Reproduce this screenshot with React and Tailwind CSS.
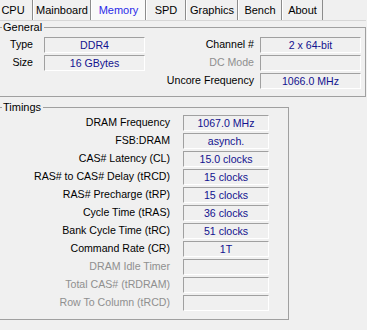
import React from "react";

const font = { fontFamily: '"Liberation Sans", Arial, sans-serif' };

function Tab({ label, w, active, extra = "" }) {
  return (
    <div
      className={`flex h-[20px] shrink-0 items-center justify-center border-l border-r border-l-white border-r-[#8c8c8c] ${
        active ? "bg-[#f9f9f9] text-[#2a2ae8]" : "bg-[#f0f0f0] text-black"
      } ${extra}`}
      style={{ width: w }}
    >
      <span className="leading-none">{label}</span>
    </div>
  );
}

function Field({ value, w }) {
  return (
    <div
      className="flex h-[16px] items-center justify-center border-t border-l border-t-[#a0a0a0] border-l-[#a0a0a0] border-b border-r border-b-white border-r-white text-[#12128f] leading-none"
      style={{ width: w }}
    >
      {value}
    </div>
  );
}

const timings = [
  ["DRAM Frequency", "1067.0 MHz", true],
  ["FSB:DRAM", "asynch.", true],
  ["CAS# Latency (CL)", "15.0 clocks", true],
  ["RAS# to CAS# Delay (tRCD)", "15 clocks", true],
  ["RAS# Precharge (tRP)", "15 clocks", true],
  ["Cycle Time (tRAS)", "36 clocks", true],
  ["Bank Cycle Time (tRC)", "51 clocks", true],
  ["Command Rate (CR)", "1T", true],
  ["DRAM Idle Timer", "", false],
  ["Total CAS# (tRDRAM)", "", false],
  ["Row To Column (tRCD)", "", false],
];

export default function App() {
  return (
    <div
      className="relative h-[330px] w-[367px] overflow-hidden bg-[#f0f0f0] text-[10.6px] text-black"
      style={font}
    >
      {/* Tabs */}
      <div className="flex h-[20px] items-stretch text-[11px]">
        <Tab label="CPU" w={40} extra="-ml-[7px]" />
        <Tab label="Mainboard" w={58} />
        <Tab label="Memory" w={55} active />
        <Tab label="SPD" w={40} />
        <Tab label="Graphics" w={52} />
        <Tab label="Bench" w={44} />
        <Tab label="About" w={41} />
      </div>
      {/* panel border */}
      <div className="h-px w-[366px] bg-[#d6d6d6]" />

      {/* General */}
      <fieldset className="-ml-px h-[76px] w-[367px] border border-[#a0a0a0]">
        <legend className="ml-[2px] pr-[2px] pl-px text-[11px] leading-[13px]">General</legend>
        <div className="mt-[3px] flex">
          <div className="flex flex-col gap-[2px]">
            <div className="flex h-[16px] items-center">
              <span className="w-[33px] text-right">Type</span>
              <div className="ml-[11px]">
                <Field value="DDR4" w={101} />
              </div>
            </div>
            <div className="flex h-[16px] items-center">
              <span className="w-[33px] text-right">Size</span>
              <div className="ml-[11px]">
                <Field value="16 GBytes" w={101} />
              </div>
            </div>
          </div>
          <div className="ml-auto mr-[4px] flex flex-col gap-[2px]">
            <div className="flex h-[16px] items-center justify-end">
              <span className="text-right">Channel #</span>
              <div className="ml-[6px]">
                <Field value="2 x 64-bit" w={101} />
              </div>
            </div>
            <div className="flex h-[16px] items-center justify-end">
              <span className="text-right text-[#8f8f8f]">DC Mode</span>
              <div className="ml-[6px]">
                <Field value="" w={101} />
              </div>
            </div>
            <div className="flex h-[16px] items-center justify-end">
              <span className="text-right">Uncore Frequency</span>
              <div className="ml-[6px]">
                <Field value="1066.0 MHz" w={101} />
              </div>
            </div>
          </div>
        </div>
      </fieldset>

      {/* Timings */}
      <fieldset className="-ml-px mt-[4px] h-[219px] w-[290px] border border-[#a0a0a0]">
        <legend className="ml-[2px] pr-[2px] pl-px text-[11px] leading-[13px]">Timings</legend>
        <div className="mt-px flex flex-col gap-[2px]">
          {timings.map(([label, value, enabled]) => (
            <div key={label} className="flex h-[16px] items-center">
              <span
                className={`w-[170px] text-right ${enabled ? "text-black" : "text-[#8f8f8f]"}`}
              >
                {label}
              </span>
              <div className="ml-[13px]">
                <Field value={value} w={86} />
              </div>
            </div>
          ))}
        </div>
      </fieldset>
    </div>
  );
}
